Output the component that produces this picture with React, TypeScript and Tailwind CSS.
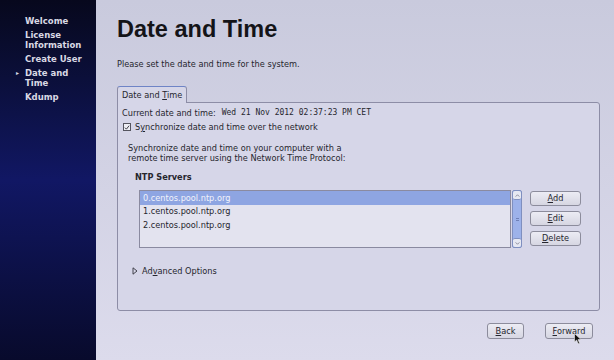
import React from 'react';

const steps = [
    { label: ['Welcome'] },
    { label: ['License', 'Information'] },
    { label: ['Create User'] },
    { label: ['Date and', 'Time'], active: true },
    { label: ['Kdump'] },
];

const servers = ['0.centos.pool.ntp.org', '1.centos.pool.ntp.org', '2.centos.pool.ntp.org'];

// label with an underlined mnemonic letter at index `at`
const Mnemonic: React.FC<{ text: string; at: number }> = ({ text, at }) => (
    <>
        {text.slice(0, at)}
        <span className="underline underline-offset-[1px]">{text[at]}</span>
        {text.slice(at + 1)}
    </>
);

const GtkButton: React.FC<{ className?: string; children: React.ReactNode }> = ({ className = '', children }) => (
    <div
        className={`flex items-center justify-center rounded-[3px] border border-[#8c8c9c] bg-gradient-to-b from-[#ececf4] to-[#d6d6e2] text-[8.2px] text-[#26262e] ${className}`}
    >
        <span>{children}</span>
    </div>
);

export default function App() {
    return (
        <div className="relative flex h-[360px] w-[614px] overflow-hidden font-['DejaVu_Sans',sans-serif] text-[#26262e]">
            <aside className="flex w-[96px] shrink-0 flex-col gap-[4px] bg-gradient-to-b from-[#07081d] via-[#111764] to-[#080a2c] pl-[25px] pt-[16px]">
                {steps.map((s) => (
                    <div key={s.label[0]} className="relative text-[8.5px] font-bold leading-[10px] text-[#d9d9e4]">
                        {s.active && (
                            <span className="absolute left-[-9px] top-[2px] text-[6px] leading-[6px] text-[#d9d9e4]">▸</span>
                        )}
                        {s.label.map((l) => (
                            <div key={l}>{l}</div>
                        ))}
                    </div>
                ))}
            </aside>

            <main className="flex flex-1 flex-col bg-gradient-to-b from-[#c9cadd] to-[#dcdbec] pl-[21px] pr-[14px]">
                <h1 className="mt-[16px] font-['Liberation_Sans',sans-serif] text-[23.5px] font-bold leading-[26px] text-[#141418]">
                    Date and Time
                </h1>
                <p className="mt-[16px] text-[8.2px] leading-[12px]">Please set the date and time for the system.</p>

                <div className="mt-[16px] flex">
                    <div className="relative z-10 -mb-px flex h-[17px] items-center rounded-t-[3px] border border-b-0 border-[#8d8da6] border-t-[#6f84c6] bg-[#d6d6e8] px-[4px] text-[8.2px]">
                        <span>
                            Date and <Mnemonic text="Time" at={0} />
                        </span>
                    </div>
                </div>
                <section className="flex h-[209px] flex-col rounded-b-[3px] rounded-tr-[3px] border border-[#8d8da6] bg-[#d6d6e8] pl-[3px] pt-[4px] text-[8.2px]">
                    <div className="flex h-[12px] items-center">
                        <span className="ml-px">Current date and time:</span>
                        <span className="ml-[6px] font-['DejaVu_Sans_Mono',monospace] text-[8px]">Wed 21 Nov 2012 02:37:23 PM CET</span>
                    </div>
                    <div className="mt-[2px] flex h-[12px] items-center">
                        <span className="ml-[2px] flex h-[8px] w-[8px] items-center justify-center border border-[#55555f] bg-[#eeeef4]">
                            <svg viewBox="0 0 8 8" className="h-[7px] w-[7px]">
                                <path d="M1.2 4.2 L3.2 6.2 L6.8 1.6" fill="none" stroke="#2a2a33" strokeWidth="1.2" />
                            </svg>
                        </span>
                        <span className="ml-[4px]">
                            S<Mnemonic text="ynchronize" at={0} /> date and time over the network
                        </span>
                    </div>

                    <div className="ml-[7px] mt-[10px] leading-[10px]">
                        <div>Synchronize date and time on your computer with a</div>
                        <div>remote time server using the Network Time Protocol:</div>
                    </div>

                    <div className="ml-[14px] mt-[8px] h-[12px] font-bold leading-[12px]">NTP Servers</div>

                    <div className="ml-[18px] mt-[7px] flex">
                        <div className="flex h-[58px] w-[372px] flex-col border border-[#8a8aa0] bg-[#e3e3ef]">
                            {servers.map((srv, i) => (
                                <div
                                    key={srv}
                                    className={`flex h-[13.5px] items-center pl-[3px] ${i === 0 ? 'bg-[#8ea5e2] text-[#f2f3fb]' : ''}`}
                                >
                                    {srv}
                                </div>
                            ))}
                        </div>
                        <div className="ml-px flex h-[58px] w-[10px] flex-col rounded-[2px] border border-[#7f8fbf] bg-[#9db2ea]">
                            <div className="flex h-[9px] items-center justify-center rounded-[2px] border-b border-[#8090c0] bg-[#e6e8f2]">
                                <svg viewBox="0 0 6 4" className="h-[3px] w-[5px]">
                                    <path d="M0.5 3.5 L3 1 L5.5 3.5" fill="none" stroke="#556" strokeWidth="0.8" />
                                </svg>
                            </div>
                            <div className="flex flex-1 items-center justify-center">
                                <div className="h-[3px] w-[3px] border-y border-[#6f80b8]" />
                            </div>
                            <div className="flex h-[9px] items-center justify-center rounded-[2px] border-t border-[#8090c0] bg-[#e6e8f2]">
                                <svg viewBox="0 0 6 4" className="h-[3px] w-[5px]">
                                    <path d="M0.5 0.5 L3 3 L5.5 0.5" fill="none" stroke="#556" strokeWidth="0.8" />
                                </svg>
                            </div>
                        </div>
                        <div className="ml-[8px] mt-px flex flex-col gap-[5px]">
                            <GtkButton className="h-[15px] w-[51px]">
                                <Mnemonic text="Add" at={0} />
                            </GtkButton>
                            <GtkButton className="h-[15px] w-[51px]">
                                <Mnemonic text="Edit" at={0} />
                            </GtkButton>
                            <GtkButton className="h-[15px] w-[51px]">
                                <Mnemonic text="Delete" at={0} />
                            </GtkButton>
                        </div>
                    </div>

                    <div className="ml-[11px] mt-[17px] flex h-[12px] items-center">
                        <svg viewBox="0 0 6 8" className="h-[8px] w-[6px]">
                            <path d="M1 0.8 L5 4 L1 7.2 Z" fill="none" stroke="#33333c" strokeWidth="0.9" />
                        </svg>
                        <span className="ml-[4px]">
                            Ad<Mnemonic text="vanced" at={0} /> Options
                        </span>
                    </div>
                </section>

                <div className="mt-[12px] flex justify-end gap-[21px] pr-[7px]">
                    <GtkButton className="h-[16px] w-[37px]">
                        <Mnemonic text="Back" at={0} />
                    </GtkButton>
                    <GtkButton className="h-[16px] w-[48px]">
                        <Mnemonic text="Forward" at={0} />
                    </GtkButton>
                </div>
            </main>

            {/* mouse pointer over the Forward button */}
            <svg viewBox="0 0 8 12" className="absolute left-[574px] top-[333px] h-[12px] w-[8px]">
                <path d="M0.5 0.5 L0.5 9 L2.6 7 L4.2 10.8 L5.6 10.2 L4 6.6 L7 6.6 Z" fill="#111" stroke="#eee" strokeWidth="0.6" />
            </svg>
        </div>
    );
}
